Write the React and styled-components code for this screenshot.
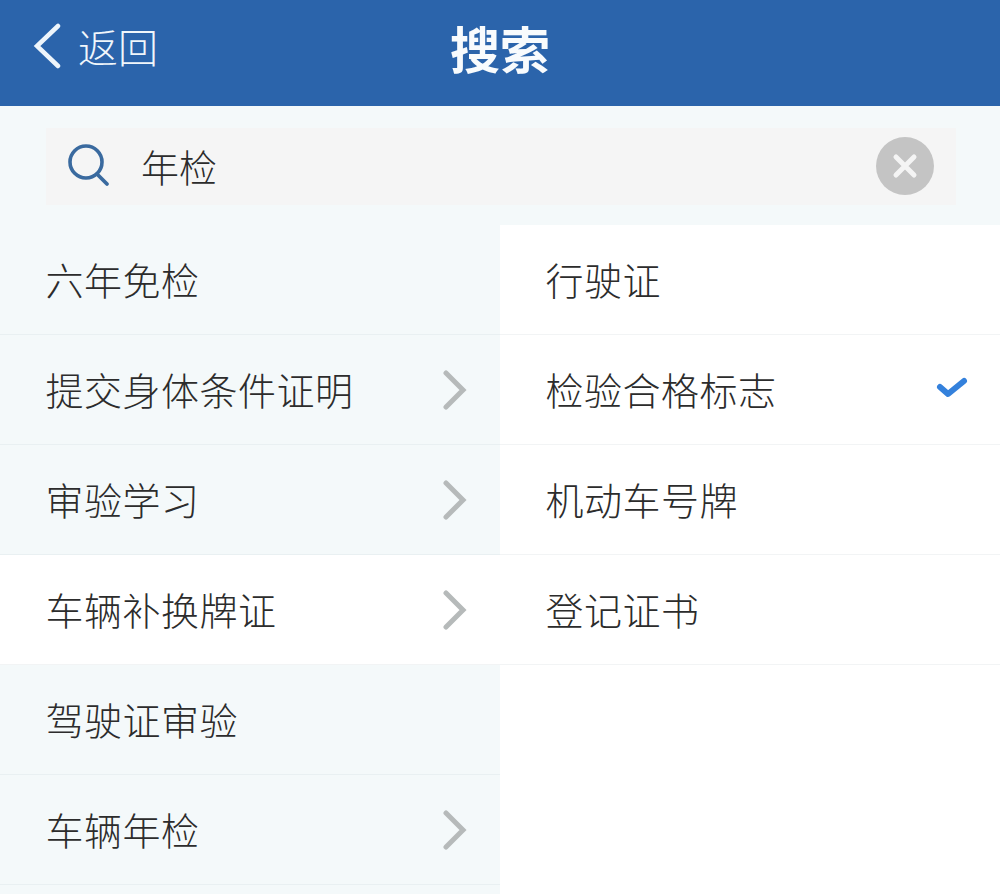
import React from "react";
import styled, { createGlobalStyle } from "styled-components";

const Global = createGlobalStyle`
  html, body { margin: 0; padding: 0; background: #fff; }
  body { font-family: "Noto Sans CJK SC", "Liberation Sans", sans-serif; }
`;
const Page = styled.div`
  width: 1000px; height: 894px; overflow: hidden; background: #fff;
  display: flex; flex-direction: column;
`;
const Header = styled.header`
  height: 106px; flex: none; background: #2b64ab; color: #fff;
  display: flex; align-items: center; justify-content: center; position: relative;
`;
const Back = styled.div`
  position: absolute; left: 33px; top: 21px; height: 50px;
  display: flex; align-items: center; gap: 17px;
  font-size: 40px; line-height: 50px; font-weight: 300; color: #f0f6fb;
`;
const Title = styled.h1`
  margin: 0 0 12px; font-size: 50px; line-height: 60px; font-weight: 700; color: #f8fbfd;
`;
const SearchBar = styled.div`
  height: 119px; flex: none; background: #f4f9fa; box-sizing: border-box; padding: 22px 44px 20px 46px;
`;
const SearchBox = styled.div`
  height: 77px; background: #f5f5f5; display: flex; align-items: center;
  padding: 0 22px 0 20px;
`;
const SearchIcon = styled.svg`
  margin-top: -4px;
`;
const Query = styled.span`
  flex: 1; margin-left: 31px; margin-top: -1px; font-size: 38px; line-height: 50px; font-weight: 300; color: #2c2c2c;
`;
const Clear = styled.span`
  width: 58px; height: 58px; margin-top: -2px; border-radius: 50%; background: #c4c4c4;
  display: flex; align-items: center; justify-content: center;
`;
const Columns = styled.div`
  flex: 1; display: flex; min-height: 0;
`;
const Column = styled.div`
  width: 500px; flex: none; background: ${p => p.$tinted ? "#f4f9fa" : "#fff"};
`;
const Row = styled.div`
  height: 110px; box-sizing: border-box; display: flex; align-items: center; justify-content: space-between;
  padding: 0 32px 1px 45.5px;
  background: ${p => p.$active ? "#fff" : "transparent"};
  border-bottom: 1px solid ${p => (p.$active || p.$right) ? "#f2f4f5" : "#e9f0f2"};
  font-size: 38px; line-height: 50px; letter-spacing: 0.5px; font-weight: 300; color: #2c2c2c;
`;
const ChevronIcon = styled.svg`
  margin-right: 1px; margin-top: 2px;
`;
const CheckIcon = styled.svg`
  margin-top: -3px; margin-right: -1px;
`;
const Chevron = () => (
  <ChevronIcon width="24" height="42" viewBox="0 0 24 42" fill="none">
    <path d="M3 4 L20 21 L3 38" stroke="#b6baba" strokeWidth="5" strokeLinecap="round" strokeLinejoin="miter" />
  </ChevronIcon>
);
const Check = () => (
  <CheckIcon width="34" height="24" viewBox="0 0 34 24" fill="none">
    <path d="M5 11 L13 18 L29 5" stroke="#3481dc" strokeWidth="6" strokeLinecap="round" strokeLinejoin="round" />
  </CheckIcon>
);

const left = [
  { t: "六年免检" },
  { t: "提交身体条件证明", c: 1 },
  { t: "审验学习", c: 1 },
  { t: "车辆补换牌证", c: 1, a: 1 },
  { t: "驾驶证审验" },
  { t: "车辆年检", c: 1 },
];
const right = [{ t: "行驶证" }, { t: "检验合格标志", k: 1 }, { t: "机动车号牌" }, { t: "登记证书" }];

export default function App() {
  return (
    <Page>
      <Global />
      <Header>
        <Back>
          <svg width="28" height="46" viewBox="0 0 28 46" fill="none">
            <path d="M25 3 L4 23 L25 43" stroke="#eef5fb" strokeWidth="4.5" strokeLinecap="round" strokeLinejoin="miter" />
          </svg>
          <span>返回</span>
        </Back>
        <Title>搜索</Title>
      </Header>
      <SearchBar>
        <SearchBox>
          <SearchIcon width="44" height="44" viewBox="0 0 44 44" fill="none">
            <circle cx="20" cy="19" r="16" stroke="#3a6a9f" strokeWidth="3.6" />
            <path d="M31 31 L41 41" stroke="#3a6a9f" strokeWidth="3.8" strokeLinecap="round" />
          </SearchIcon>
          <Query>年检</Query>
          <Clear>
            <svg width="26" height="26" viewBox="0 0 26 26" fill="none">
              <path d="M4 4 L22 22 M22 4 L4 22" stroke="#f4f4f4" strokeWidth="5" strokeLinecap="round" />
            </svg>
          </Clear>
        </SearchBox>
      </SearchBar>
      <Columns>
        <Column $tinted>
          {left.map(r => (
            <Row key={r.t} $active={r.a}>
              <span>{r.t}</span>
              {r.c ? <Chevron /> : null}
            </Row>
          ))}
        </Column>
        <Column>
          {right.map(r => (
            <Row key={r.t} $right>
              <span>{r.t}</span>
              {r.k ? <Check /> : null}
            </Row>
          ))}
        </Column>
      </Columns>
    </Page>
  );
}
